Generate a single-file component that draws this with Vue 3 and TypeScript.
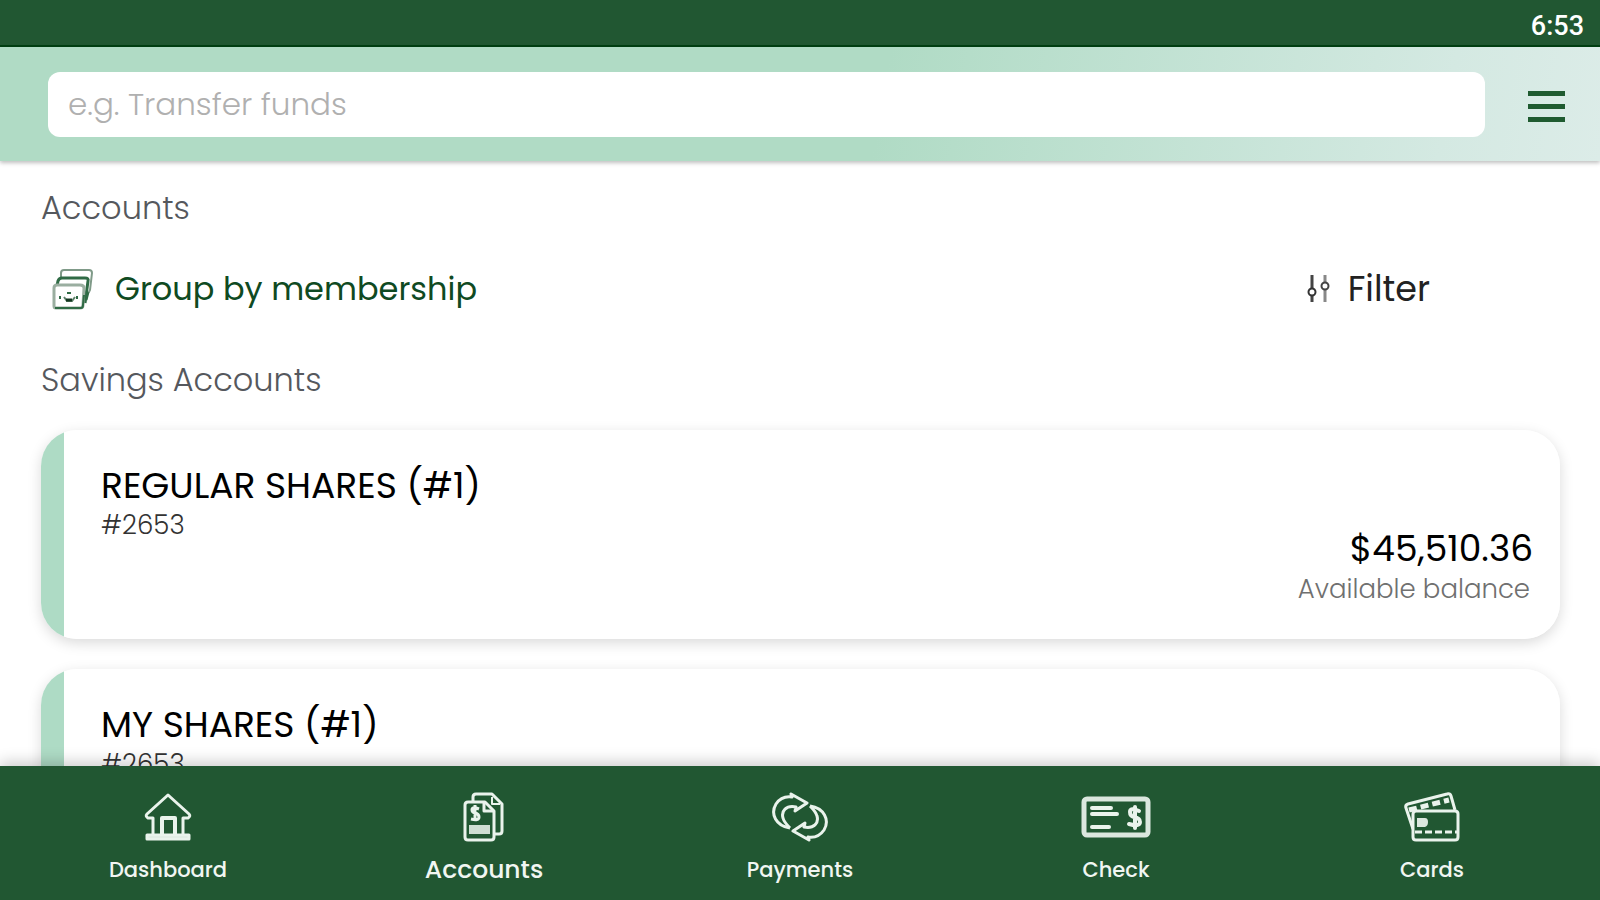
<script setup lang="ts">
import { ref } from 'vue'

interface Account {
  id: string
  name: string
  number: string
  balance: string
}

interface Tab {
  id: string
  label: string
}

const query = ref('')
const current = ref('accounts')

const accounts: Account[] = [
  { id: 'regular', name: 'REGULAR SHARES (#1)', number: '#2653', balance: '$45,510.36' },
  { id: 'my', name: 'MY SHARES (#1)', number: '#2653', balance: '' },
]

const tabs: Tab[] = [
  { id: 'dashboard', label: 'Dashboard' },
  { id: 'accounts', label: 'Accounts' },
  { id: 'payments', label: 'Payments' },
  { id: 'check', label: 'Check' },
  { id: 'cards', label: 'Cards' },
]
</script>

<template>
  <div class="app">
    <div class="status"><time>6:53</time></div>

    <header class="header">
      <input v-model="query" class="search" type="text" placeholder="e.g. Transfer funds" aria-label="Search" />
      <button class="menu" type="button" aria-label="Menu">
        <span class="bar"></span>
        <span class="bar"></span>
        <span class="bar"></span>
      </button>
    </header>

    <main class="content">
      <h1 class="heading">Accounts</h1>

      <div class="tools">
        <button class="group" type="button">
          <svg width="42" height="42" viewBox="0 0 42 42" fill="none" stroke-width="2" aria-hidden="true">
            <path d="M9 9V5q0-3 3-3h25q3 0 3 3l-2 17q-1 3-3 3" stroke="#7f9a88" />
            <path d="M5 18l1-5q1-3 4-3h23q4 0 3 3l-3 22M36 24l-2 8" stroke="#2f6b45" stroke-width="3" />
            <path d="M2 38V20q0-3 3-3h23q4 0 4 3l-1 17q0 3-3 3H4q-2 0-2-2z" fill="#fff" stroke="#9aaea0" stroke-width="3" />
            <path d="M3 40h26q2 0 2-3l1-10" stroke="#2f6b45" />
            <path d="M15 25h4M8 28v3M25 28v3" stroke="#2f6b45" />
            <path d="M12 29l3 4h5l3-4" stroke="#5c8068" />
            <path d="M14 32h6" stroke="#12351f" stroke-width="3" />
          </svg>
          <span>Group by membership</span>
        </button>
        <button class="filter" type="button">
          <svg width="24" height="30" viewBox="0 0 24 30" fill="none" stroke-width="2" aria-hidden="true">
            <path d="M5 1v13M5 22v6" stroke="#444" stroke-width="3" />
            <path d="M18 1v7M18 15v13" stroke="#888" stroke-width="3" />
            <circle cx="5" cy="18" r="3.5" stroke="#333" />
            <circle cx="18" cy="12" r="3.5" stroke="#444" />
          </svg>
          <span>Filter</span>
        </button>
      </div>

      <h2 class="heading section">Savings Accounts</h2>

      <ul class="list">
        <li v-for="account in accounts" :key="account.id" class="card">
          <div>
            <div class="name">{{ account.name }}</div>
            <div class="number">{{ account.number }}</div>
          </div>
          <div v-if="account.balance" class="balance">
            <div class="amount">{{ account.balance }}</div>
            <div class="caption">Available balance</div>
          </div>
        </li>
      </ul>
    </main>

    <nav class="nav" aria-label="Main">
      <button
        v-for="tab in tabs"
        :key="tab.id"
        type="button"
        class="tab"
        :class="{ active: tab.id === current }"
        @click="current = tab.id"
      >
        <span class="icon">
          <svg v-if="tab.id === 'dashboard'" width="48" height="50" viewBox="0 0 48 50" fill="none" stroke="#eaf3ec" stroke-width="3" stroke-linejoin="round" aria-hidden="true">
            <path d="M9 42V26H4q-3-2-1-4L24 3l21 19q2 2-1 4h-5v16" />
            <path d="M18 42V26h13v16" stroke-width="4" />
            <path d="M3 43h42v4H3z" fill="#dbe7de" />
          </svg>

          <svg v-else-if="tab.id === 'accounts'" width="42" height="50" viewBox="0 0 42 50" fill="none" stroke="#eaf3ec" stroke-width="3" stroke-linejoin="round" aria-hidden="true">
            <path d="M10 9V5q0-3 3-3h16l10 10v27q0 3-3 3h-4" />
            <path d="M29 5v7h8" stroke-width="2" />
            <path d="M2 13q0-3 3-3h17l9 9v26q0 3-3 3H5q-3 0-3-3z" fill="#215732" />
            <path d="M21 11v8h9" />
            <path d="M16 17q-7-3-7 1 0 2 3 3 4 1 4 4 0 4-8 2M12 13v16" />
            <path d="M6 33h21v9H6z" fill="#cfdfd3" stroke="none" />
          </svg>

          <svg v-else-if="tab.id === 'payments'" width="56" height="50" viewBox="0 0 56 50" fill="none" stroke="#eaf3ec" stroke-width="3" stroke-linejoin="round" aria-hidden="true">
            <path d="M18 36C4 34-2 22 4 12 8 6 13 4 20 5l-1-3 16 9-12 8 1-4c-10-2-15 4-13 11 1 4 4 7 7 10" />
            <path d="M18 36C4 34-2 22 4 12 8 6 13 4 20 5l-1-3 16 9-12 8 1-4c-10-2-15 4-13 11 1 4 4 7 7 10" transform="rotate(180 28 25)" />
          </svg>

          <svg v-else-if="tab.id === 'check'" width="70" height="42" viewBox="0 0 70 42" fill="none" stroke="#eaf3ec" stroke-width="4" stroke-linecap="round" aria-hidden="true">
            <rect x="3" y="3" width="64" height="36" rx="3" stroke="#dbe7de" stroke-width="5" />
            <path d="M11 12h19M11 18h25M11 31h17" />
            <path d="M58 15q-9-4-9 1 0 4 4 5 6 1 6 5 0 5-11 2M54 11v21" />
          </svg>

          <svg v-else width="56" height="50" viewBox="0 0 56 50" fill="none" stroke="#eaf3ec" stroke-width="3" stroke-linejoin="round" aria-hidden="true">
            <path d="M9 37L2 16q-1-3 2-4L43 2q3-1 4 2l4 14" />
            <path d="M5 18l40-10" stroke-width="5" stroke-dasharray="8 4" />
            <path d="M9 22q0-3 3-3h39q3 0 3 3v23q0 3-3 3H12q-3 0-3-3z" fill="#215732" />
            <path d="M13 26h8q3 0 3 4t-3 5h-8z" fill="#dbe7de" stroke="none" />
            <path d="M11 40h42" stroke-dasharray="7 3" />
          </svg>
        </span>
        <span class="label">{{ tab.label }}</span>
      </button>
    </nav>
  </div>
</template>

<style>
body {
  margin: 0;
  background: #fff;
}
</style>

<style scoped>
.app {
  display: flex;
  flex-direction: column;
  height: 100vh;
  overflow: hidden;
  background: #fff;
  color: #111;
  font-family: Poppins, Inter, "Liberation Sans", sans-serif;
}

button {
  padding: 0;
  border: 0;
  background: none;
  color: inherit;
  font: inherit;
  cursor: pointer;
}

.status {
  display: flex;
  flex: none;
  align-items: center;
  justify-content: flex-end;
  box-sizing: border-box;
  height: 47px;
  padding: 6px 16px 0 0;
  border-bottom: 2px solid #003f12;
  background: #215732;
  color: #fff;
  font: 500 27px/32px Roboto, sans-serif;
}

.header {
  position: relative;
  display: flex;
  flex: none;
  align-items: center;
  gap: 43px;
  height: 114px;
  padding: 0 35px 0 48px;
  background: linear-gradient(100deg, #b0dbc5 0%, #b0dbc5 55%, #d4e9e2 90%, #dcece8 100%);
  box-shadow: 0 2px 4px rgba(0, 0, 0, 0.25);
}

.search {
  flex: 1;
  box-sizing: border-box;
  min-width: 0;
  height: 65px;
  padding: 0 20px;
  border: 0;
  border-radius: 12px;
  outline: 0;
  background: #fff;
  color: #333;
  font: 300 31px/40px Poppins, Inter, "Liberation Sans", sans-serif;
}

.search::placeholder {
  color: #b0b0b0;
  opacity: 1;
}

.menu {
  display: flex;
  flex-direction: column;
  gap: 8px;
  width: 37px;
  padding-top: 4px;
}

.bar {
  height: 5px;
  background: #1f5b30;
}

.content {
  flex: 1;
  min-height: 0;
  padding: 27px 40px 0 41px;
  overflow: hidden;
}

.heading {
  margin: 0;
  color: #55585d;
  font-size: 32px;
  font-weight: 300;
  line-height: 40px;
}

.tools {
  display: flex;
  align-items: center;
  justify-content: space-between;
  margin-top: 36px;
  padding: 0 130px 0 11px;
}

.group,
.filter {
  display: flex;
  align-items: center;
  line-height: 50px;
}

.group {
  gap: 21px;
  color: #0f4a22;
  font-size: 32px;
}

.filter {
  gap: 17px;
  color: #222;
  font-size: 35px;
}

.section {
  margin-top: 46px;
}

.list {
  display: flex;
  flex-direction: column;
  gap: 30px;
  margin: 30px 0 0;
  padding: 0;
  list-style: none;
}

.card {
  display: flex;
  justify-content: space-between;
  box-sizing: border-box;
  min-height: 209px;
  padding: 32px 27px 32px 60px;
  border-radius: 36px;
  background: linear-gradient(to right, #aedbc5 23px, #fff 23px);
  box-shadow: 0 4px 14px rgba(0, 0, 0, 0.15);
}

.name {
  color: #000;
  font-size: 36px;
  line-height: 48px;
}

.number {
  color: #333;
  font-size: 26px;
  font-weight: 300;
  line-height: 30px;
}

.balance {
  align-self: flex-end;
  text-align: right;
}

.amount {
  color: #000;
  font-size: 36px;
  line-height: 44px;
}

.caption {
  padding-right: 3px;
  color: #707070;
  font-size: 26px;
  font-weight: 300;
  line-height: 36px;
}

.nav {
  position: relative;
  display: flex;
  flex: none;
  box-sizing: border-box;
  height: 134px;
  padding: 26px 10px 0;
  background: #215732;
  box-shadow: 0 -4px 14px rgba(0, 0, 0, 0.2);
}

.tab {
  display: flex;
  flex: 1;
  flex-direction: column;
  align-items: center;
  gap: 12px;
  color: #f1f6f2;
  font-size: 21px;
  font-weight: 500;
}

.icon {
  display: flex;
  align-items: center;
  height: 50px;
}

.label {
  line-height: 32px;
}

.active {
  font-size: 25px;
}
</style>
